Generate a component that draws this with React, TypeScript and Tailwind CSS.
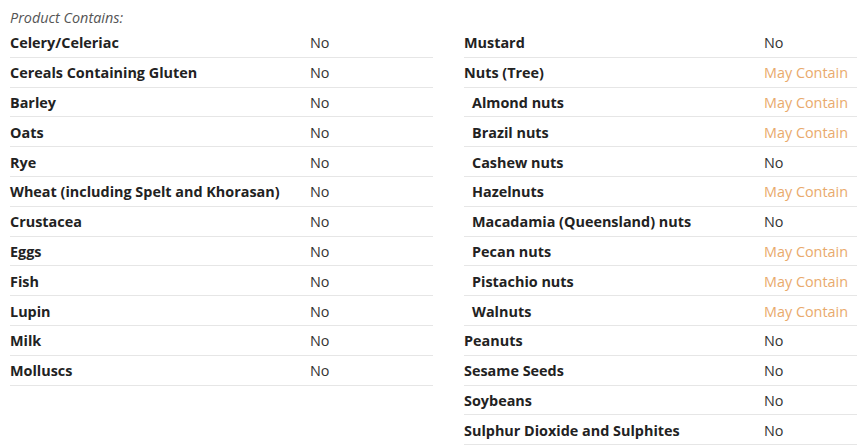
import React from "react";

type Row = { label: string; value: string; sub?: boolean };

const left: Row[] = [
  { label: "Celery/Celeriac", value: "No" },
  { label: "Cereals Containing Gluten", value: "No" },
  { label: "Barley", value: "No" },
  { label: "Oats", value: "No" },
  { label: "Rye", value: "No" },
  { label: "Wheat (including Spelt and Khorasan)", value: "No" },
  { label: "Crustacea", value: "No" },
  { label: "Eggs", value: "No" },
  { label: "Fish", value: "No" },
  { label: "Lupin", value: "No" },
  { label: "Milk", value: "No" },
  { label: "Molluscs", value: "No" },
];

const right: Row[] = [
  { label: "Mustard", value: "No" },
  { label: "Nuts (Tree)", value: "May Contain" },
  { label: "Almond nuts", value: "May Contain", sub: true },
  { label: "Brazil nuts", value: "May Contain", sub: true },
  { label: "Cashew nuts", value: "No", sub: true },
  { label: "Hazelnuts", value: "May Contain", sub: true },
  { label: "Macadamia (Queensland) nuts", value: "No", sub: true },
  { label: "Pecan nuts", value: "May Contain", sub: true },
  { label: "Pistachio nuts", value: "May Contain", sub: true },
  { label: "Walnuts", value: "May Contain", sub: true },
  { label: "Peanuts", value: "No" },
  { label: "Sesame Seeds", value: "No" },
  { label: "Soybeans", value: "No" },
  { label: "Sulphur Dioxide and Sulphites", value: "No" },
];

function Table({ rows, className }: { rows: Row[]; className: string }) {
  return (
    <div className={className}>
      {rows.map((r) => (
        <div
          key={r.label}
          className="flex items-center h-[29.8px] pt-[2px] border-b border-[#e6e6e6] text-[14.4px] leading-[20px]"
        >
          <div
            className={`w-[300px] shrink-0 font-bold text-[#222] ${r.sub ? "pl-[8px]" : ""}`}
          >
            {r.label}
          </div>
          <div className={r.value === "No" ? "text-[#333]" : "text-[#e9aa6c]"}>{r.value}</div>
        </div>
      ))}
    </div>
  );
}

export default function App() {
  return (
    <div
      className="w-[857px] h-[445px] overflow-hidden bg-white pl-[10px]"
      style={{ fontFamily: '"Open Sans", sans-serif' }}
    >
      <div className="h-[28.5px] pt-[8px] text-[14.4px] leading-[20px] italic text-[#555]">
        Product Contains:
      </div>
      <div className="flex items-start gap-[31px] -mt-[0.5px]">
        <Table rows={left} className="w-[423px] shrink-0" />
        <Table rows={right} className="w-[400px] shrink-0" />
      </div>
    </div>
  );
}
